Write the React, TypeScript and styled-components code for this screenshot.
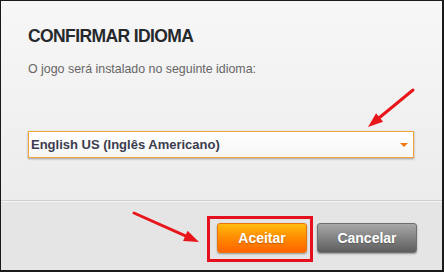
import React, {FC} from 'react';
import styled, {createGlobalStyle} from 'styled-components';

const GlobalStyle = createGlobalStyle`
  html, body {
    margin: 0;
    padding: 0;
    background: #ffffff;
  }
  body {
    font-family: "Liberation Sans", Arial, sans-serif;
  }
`

type ArrowProps = {
  x1: number
  y1: number
  x2: number
  y2: number
};

// annotation arrow, head drawn as a filled triangle at (x2, y2)
const Arrow: FC<ArrowProps> = ({x1, y1, x2, y2}) => {
  const dx = x2 - x1;
  const dy = y2 - y1;
  const len = Math.sqrt(dx * dx + dy * dy);
  const ux = dx / len;
  const uy = dy / len;
  const head = 15;
  const half = 5.5;
  const bx = x2 - ux * head;
  const by = y2 - uy * head;
  const px = -uy * half;
  const py = ux * half;
  const points = `${x2},${y2} ${bx + px},${by + py} ${bx - px},${by - py}`;

  return (
    <g>
      <line x1={x1} y1={y1} x2={bx + ux * 2} y2={by + uy * 2} stroke="#e8161b" strokeWidth={3} strokeLinecap="round" />
      <polygon points={points} fill="#e8161b" />
    </g>
  );
};

const App: FC = () => {
  return (
    <>
      <GlobalStyle />
      <Dialog>
        <Content>
          <Title>CONFIRMAR IDIOMA</Title>
          <Subtitle>O jogo será instalado no seguinte idioma:</Subtitle>
          <Select>
            <SelectText>English US (Inglês Americano)</SelectText>
            <Caret />
          </Select>
        </Content>
        <Footer>
          <Highlight>
            <Button $variant="accept">Aceitar</Button>
          </Highlight>
          <Button $variant="cancel" $offset={7}>Cancelar</Button>
        </Footer>
        <Annotations width="444" height="272" viewBox="0 0 444 272">
          <Arrow x1={413} y1={90} x2={368} y2={127} />
          <Arrow x1={134} y1={213} x2={199} y2={242} />
        </Annotations>
      </Dialog>
    </>
  );
};

export default App;

const Dialog = styled.div`
  position: relative;
  box-sizing: border-box;
  width: 444px;
  height: 272px;
  display: flex;
  flex-direction: column;
  border-style: solid;
  border-color: #1a1a1a;
  border-width: 1px 2px 2px 1px;
  background: #e6e6e6;
  overflow: hidden;
`
const Content = styled.div`
  box-sizing: border-box;
  height: 199px;
  display: flex;
  flex-direction: column;
  padding: 25px 28px 0 27px;
  background: linear-gradient(to bottom, #f7f7f7 0%, #ececec 100%);
`
const Title = styled.h1`
  margin: 0;
  font-size: 17.5px;
  line-height: 20px;
  font-weight: bold;
  letter-spacing: -0.6px;
  color: #25282c;
`
const Subtitle = styled.p`
  margin: 16px 0 0;
  font-size: 12.4px;
  line-height: 15px;
  color: #666666;
`
const Select = styled.div`
  box-sizing: border-box;
  margin-top: 54px;
  width: 386px;
  height: 27px;
  display: flex;
  align-items: center;
  justify-content: space-between;
  padding: 0 5px 0 2px;
  border: 1px solid #f2a33a;
  background: linear-gradient(to bottom, #ffffff 0%, #f6f6f6 100%);
  box-shadow: 0 1px 2px rgba(0, 0, 0, 0.35);
`
const SelectText = styled.span`
  font-size: 13px;
  font-weight: bold;
  color: #3b3d4e;
`
const Caret = styled.span`
  width: 0;
  height: 0;
  border-left: 4px solid transparent;
  border-right: 4px solid transparent;
  border-top: 4px solid #f07a10;
`
const Footer = styled.div`
  box-sizing: border-box;
  flex: 1;
  display: flex;
  justify-content: flex-end;
  align-items: flex-start;
  gap: 4px;
  padding: 15px 25px 0 0;
  border-top: 1px solid #cfcfcf;
  box-shadow: inset 0 1px 0 #f6f6f6;
  background: #e5e5e5;
`
const Highlight = styled.div`
  display: flex;
  padding: 4px 3px 6px 7px;
  border: 3px solid #e60f1e;
`
const Button = styled.button<{$variant: 'accept' | 'cancel'; $offset?: number}>`
  box-sizing: border-box;
  margin-top: ${p => p.$offset ?? 0}px;
  width: ${p => (p.$variant === 'accept' ? 90 : 100)}px;
  height: 30px;
  padding: 0;
  border-radius: 3px;
  font-family: "Liberation Sans", Arial, sans-serif;
  font-size: 14px;
  font-weight: bold;
  color: #ffffff;
  text-shadow: 0 1px 1px rgba(0, 0, 0, 0.25);
  border: 1px solid ${p => (p.$variant === 'accept' ? '#e8740c' : '#6e6e6e')};
  background: ${p => (p.$variant === 'accept'
    ? 'linear-gradient(to bottom, #ffbb10 0%, #ff8a00 50%, #ff6400 100%)'
    : 'linear-gradient(to bottom, #a8a8a8 0%, #828282 50%, #5e5e5e 100%)')};
  box-shadow: 0 1px 2px rgba(0, 0, 0, 0.35);
`
const Annotations = styled.svg`
  position: absolute;
  top: -1px;
  left: -1px;
  pointer-events: none;
`
